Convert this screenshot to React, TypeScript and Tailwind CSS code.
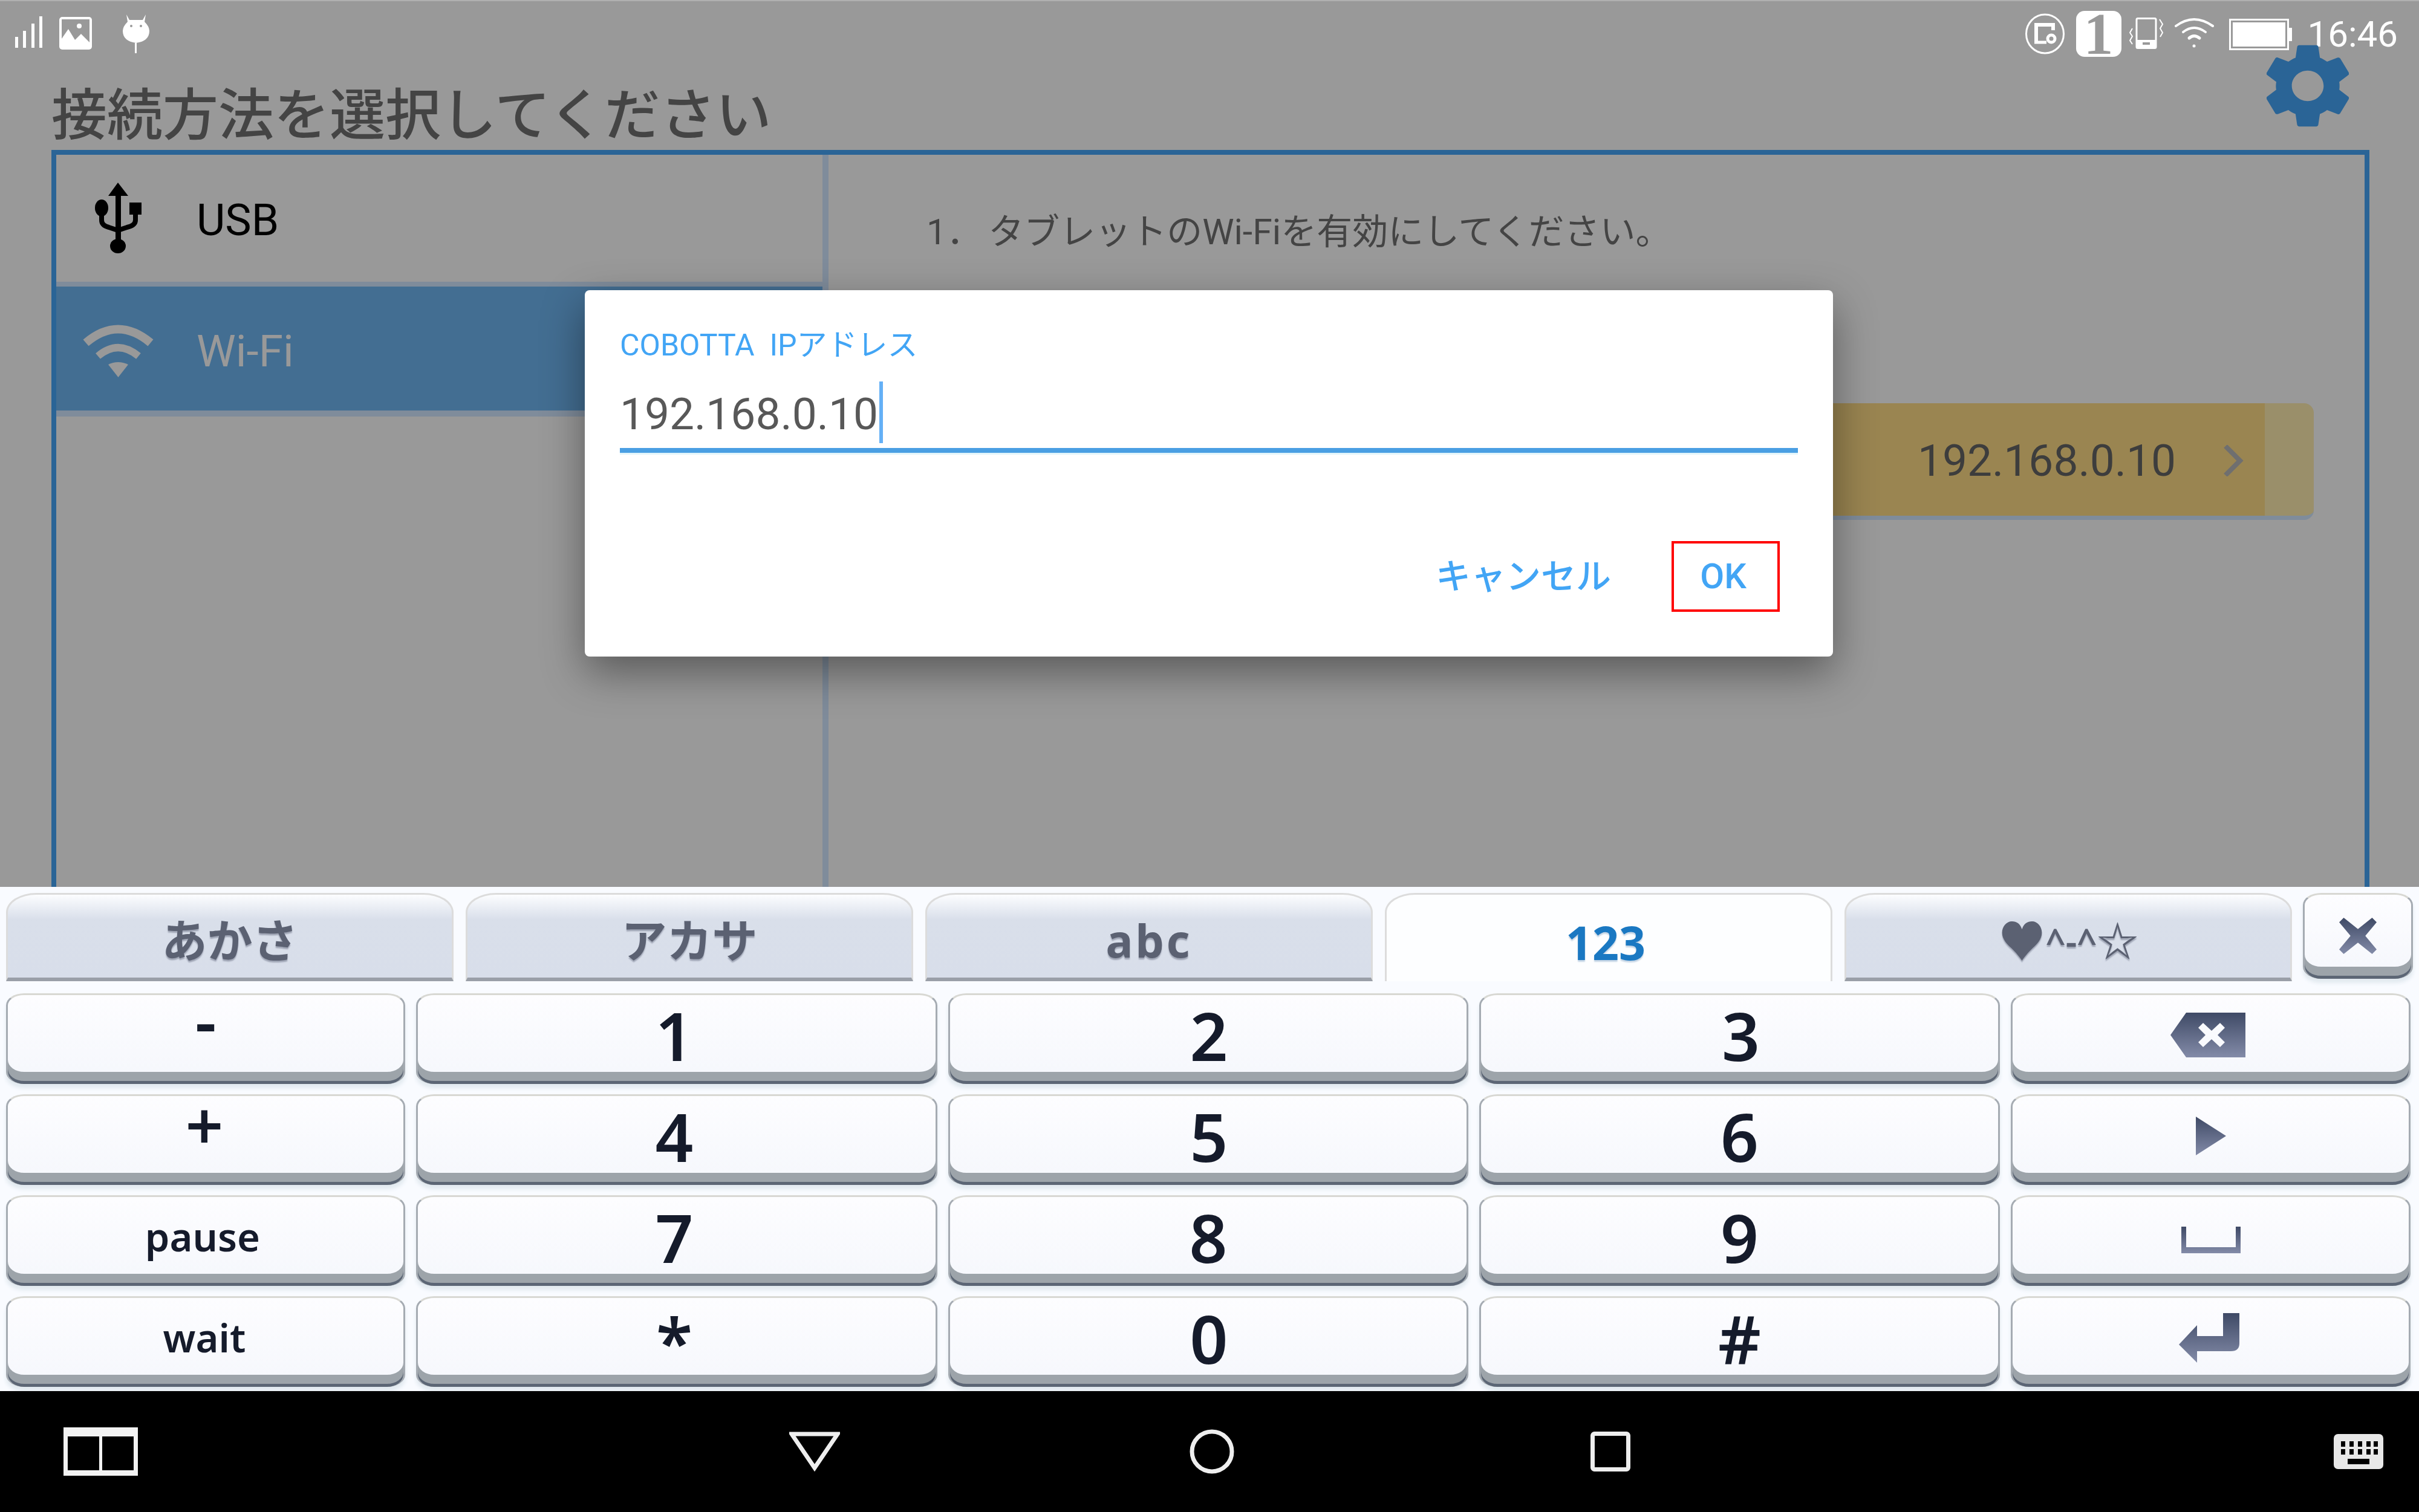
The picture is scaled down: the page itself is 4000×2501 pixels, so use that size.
import type { ReactNode } from 'react';

const SANS = "font-[Roboto,'Noto_Sans_CJK_JP',sans-serif]";

// status bar icons
function StatusLeft() {
  return (
    <div className="flex items-start pl-[25px] pt-[22px]">
      <svg width="46" height="52" viewBox="0 0 46 52" className="mt-[3px]" fill="#fff">
        <rect x="0" y="34" width="5" height="18" />
        <rect x="13" y="24" width="5" height="28" />
        <rect x="27" y="12" width="5" height="40" />
        <rect x="40" y="0" width="5" height="52" />
      </svg>
      <svg width="54" height="54" viewBox="0 0 54 54" className="ml-[27px] mt-[4px]">
        <rect x="0" y="0" width="54" height="54" rx="5" fill="#fff" />
        <rect x="4" y="4" width="46" height="46" fill="#999" />
        <circle cx="33" cy="15" r="4" fill="#fff" />
        <path d="M4 36 L15 20 L26 38 L36 28 L50 42 V50 H4 Z" fill="#fff" />
      </svg>
      <svg width="46" height="64" viewBox="0 0 46 64" className="ml-[50px]" fill="#fff">
        <path d="M7 0 L12 9 H34 L39 0 L37 12 Q45 20 45 27 Q45 44 23 47 Q1 44 1 27 Q1 20 9 12 Z" />
        <circle cx="15" cy="19" r="2" fill="#999" />
        <circle cx="31" cy="19" r="2" fill="#999" />
        <rect x="21" y="47" width="3" height="17" />
      </svg>
    </div>
  );
}

function StatusRight() {
  return (
    <div className="flex items-start pr-[35px] pt-[16px]">
      <svg width="67" height="68" viewBox="0 0 67 68" className="mt-[4px]" fill="none" stroke="#fff">
        <ellipse cx="33.5" cy="34" rx="31" ry="32" strokeWidth="3" />
        <path d="M19 48 V19 H47 V28" strokeWidth="6" />
        <path d="M16 48 H36" strokeWidth="5" />
        <circle cx="44" cy="42" r="6" strokeWidth="5" />
      </svg>
      <div className="ml-[18px] flex h-[76px] w-[75px] items-center justify-center rounded-[14px] bg-white font-['Liberation_Serif',serif] text-[98px] leading-none font-bold text-[#999]">
        1
      </div>
      <svg width="57" height="52" viewBox="0 0 57 52" className="ml-[13px] mt-[11px]" fill="none" stroke="#fff" strokeWidth="2">
        <rect x="12" y="1.5" width="32" height="49" rx="2" strokeWidth="3" />
        <rect x="12" y="38" width="32" height="12" fill="#fff" />
        <rect x="22" y="41" width="12" height="4" fill="#999" stroke="none" />
        <path d="M5 18 L1 25 L5 31 L1 38 L5 44" />
        <path d="M50 3 L55 11 L51 18 L55 25 L51 32" />
      </svg>
      <svg width="65" height="52" viewBox="0 0 65 52" className="ml-[18px] mt-[11px]" fill="none" stroke="#fff" strokeLinecap="round">
        <path d="M2 14 Q32 -8 63 14" strokeWidth="4" />
        <path d="M14 24 Q32 10 51 24" strokeWidth="4" />
        <path d="M24 34 Q32 27 41 34" strokeWidth="5" />
        <circle cx="32" cy="47" r="2.5" fill="#fff" stroke="none" />
      </svg>
      <svg width="104" height="52" viewBox="0 0 104 52" className="ml-[25px] mt-[13px]">
        <rect x="1.5" y="1.5" width="96" height="49" fill="none" stroke="#fff" strokeWidth="3" />
        <rect x="6" y="6" width="87" height="40" fill="#fff" />
        <rect x="99" y="15" width="5" height="22" fill="#fff" />
      </svg>
      <div className="ml-[26px] mt-[5px] font-[Roboto,sans-serif] text-[60px] leading-[68px] font-normal text-white">16:46</div>
    </div>
  );
}

function UsbIcon() {
  return (
    <svg width="80" height="118" viewBox="0 0 80 118" fill="#000">
      <path d="M40 0 L24 22 H57 Z" />
      <rect x="36" y="20" width="9" height="82" />
      <ellipse cx="40" cy="105" rx="13" ry="12" />
      <ellipse cx="13" cy="42" rx="11" ry="14" />
      <rect x="59" y="33" width="20" height="20" />
      <path d="M13 50 V62 Q13 71 25 74 L40 79 L55 74 Q69 71 69 62 V50" fill="none" stroke="#000" strokeWidth="8" />
    </svg>
  );
}

function WifiIcon() {
  return (
    <svg width="121" height="88" viewBox="0 0 121 88" fill="none" stroke="#999">
      <path d="M7 31 Q60 -14 114 31" strokeWidth="14" />
      <path d="M27 53 Q60 25 94 53" strokeWidth="12" />
      <path d="M44 67 Q60 59 77 67 L60.5 88 Z" fill="#999" stroke="none" />
    </svg>
  );
}

function GearIcon() {
  return (
    <svg width="136" height="140" viewBox="2.7 2 18.6 20" preserveAspectRatio="none" fill="#2a6496">
      <path d="M19.14 12.94c.04-.3.06-.61.06-.94 0-.32-.02-.64-.07-.94l2.03-1.58c.18-.14.23-.41.12-.61l-1.92-3.32c-.12-.22-.37-.29-.59-.22l-2.39.96c-.5-.38-1.03-.7-1.62-.94l-.36-2.54c-.04-.24-.24-.41-.48-.41h-3.84c-.24 0-.43.17-.47.41l-.36 2.54c-.59.24-1.13.57-1.62.94l-2.39-.96c-.22-.08-.47 0-.59.22L2.74 8.87c-.12.21-.08.47.12.61l2.03 1.58c-.05.3-.09.63-.09.94s.02.64.07.94l-2.03 1.58c-.18.14-.23.41-.12.61l1.92 3.32c.12.22.37.29.59.22l2.39-.96c.5.38 1.03.7 1.62.94l.36 2.54c.05.24.24.41.48.41h3.84c.24 0 .44-.17.47-.41l.36-2.54c.59-.24 1.13-.56 1.62-.94l2.39.96c.22.08.47 0 .59-.22l1.92-3.32c.12-.22.07-.47-.12-.61l-2.01-1.58zM12 15.6c-1.98 0-3.6-1.62-3.6-3.6s1.62-3.6 3.6-3.6 3.6 1.62 3.6 3.6-1.62 3.6-3.6 3.6z" />
    </svg>
  );
}

// IP入力ダイアログ
function IpDialog() {
  return (
    <div className={`absolute left-[967px] top-[478px] h-[606px] w-[2064px] rounded-[8px] bg-white shadow-[0_26px_70px_rgba(0,0,0,0.42)] ${SANS}`}>
      <div className="pl-[58px] pt-[56px] text-[50px] leading-[70px] whitespace-pre text-[#42a5f5]">COBOTTA  IPアドレス</div>
      <div className="mx-[58px] mt-[33px] flex h-[110px] items-start border-b-[8px] border-[#4a9fe3] shadow-[0_3px_0_#e3f5fb]">
        <span className="text-[73px] leading-[92px] text-[#585858]">192.168.0.10</span>
        <span className="ml-[2px] mt-[-8px] h-[102px] w-[6px] bg-[#64b0f6]"></span>
      </div>
      <div className="mr-[88px] mt-[146px] flex items-center justify-end">
        <span className="text-[58px] leading-none font-medium text-[#42a5f5]">キャンセル</span>
        <div className="ml-[100px] flex h-[117px] w-[179px] items-center justify-center border-[4px] border-[#f00] pr-[8px] text-[58px] font-medium text-[#42a5f5]">OK</div>
      </div>
    </div>
  );
}

function ConnectionScreen() {
  return (
    <div className={`relative h-[1467px] shrink-0 overflow-hidden border-t-[2px] border-[#b0b0b0] bg-[#999] ${SANS}`}>
      <div className="flex h-[108px] justify-between">
        <StatusLeft />
        <StatusRight />
      </div>
      <div className="absolute left-[3748px] top-[70px]">
        <GearIcon />
      </div>
      <h1 className="h-[138px] pl-[85px] pt-[34px] text-[92px] leading-[96px] font-medium text-[#444]">接続方法を選択してください</h1>
      <div className="ml-[85px] flex h-[1300px] w-[3833px] border-[8px] border-b-0 border-[#2a6496]">
        <div className="w-[1277px] shrink-0 border-r-[10px] border-[#7f8c9b]">
          <div className="flex h-[218px] items-center border-b-[8px] border-[#7f8c9b] pl-[62px]">
            <UsbIcon />
            <span className="ml-[90px] mt-[6px] text-[73px] leading-none text-black">USB</span>
          </div>
          <div className="flex h-[215px] items-center border-b-[10px] border-[#7f8c9b] bg-[#436e92] pl-[42px] pt-[6px]">
            <WifiIcon />
            <span className="ml-[69px] mt-[4px] text-[73px] leading-none text-[#999]">Wi-Fi</span>
          </div>
        </div>
        <div className="flex-1">
          <p className="pl-[162px] pt-[93px] text-[59px] leading-[70px] text-[#444]">
            <span className="mr-[10px]">1．</span>タブレットのWi-Fiを有効にしてください。
          </p>
          <div className="ml-auto mr-[84px] mt-[248px] flex h-[193px] w-[1500px] overflow-hidden rounded-r-[16px] border-b-[7px] border-[#7f8c9b] bg-[#9a8f6a]">
            <div className="flex flex-1 items-center justify-end bg-[#9a8551] pt-[4px]">
              <span className="text-[73px] leading-none text-[#3d3d3d]">192.168.0.10</span>
              <svg width="34" height="52" viewBox="0 0 34 52" className="ml-[78px] mr-[35px]" fill="none" stroke="#6f6f6f" strokeWidth="8">
                <path d="M4 2 L28 26 L4 50" />
              </svg>
            </div>
            <div className="w-[81px]"></div>
          </div>
        </div>
      </div>
      <IpDialog />
    </div>
  );
}

function Tab({ children, active = false, className = '' }: { children: ReactNode; active?: boolean; className?: string }) {
  if (active) {
    return (
      <div className={`flex h-[146px] w-[740px] shrink-0 items-center justify-center rounded-tl-[50px_32px] rounded-tr-[50px_32px] border-[3px] border-b-0 border-[#dcdcdc] bg-[#fdfeff] pt-[14px] pr-[10px] text-[77px] leading-none font-bold text-[#1a78c2] [text-shadow:0_3px_2px_#c5d5e5] ${className}`}>
        {children}
      </div>
    );
  }
  return (
    <div className={`flex h-[146px] w-[740px] shrink-0 items-center justify-center rounded-tl-[50px_32px] rounded-tr-[50px_32px] border-[3px] border-b-[6px] border-[#dcdcdc] border-b-[#9a9fa8] bg-gradient-to-b from-[#fcfdff] via-[#d9dfea] via-30% to-[#d8deea] pt-[14px] text-[75px] leading-none font-bold text-[#5b6172] [text-shadow:0_3px_2px_#9ea4b4] ${className}`}>
      {children}
    </div>
  );
}

function Key({ children, className = '' }: { children: ReactNode; className?: string }) {
  return (
    <div className={`flex items-center justify-center rounded-[30px_/_20px] border-x-[3px] border-t-[3px] border-x-[#a5abb2] border-t-[#d8d8d3] bg-gradient-to-b from-[#fdfdff] to-[#f5f7fc] pb-[16px] leading-none font-semibold text-[#151b2b] shadow-[inset_0_-5px_0_#5c6675,inset_0_-20px_0_#9da4aa,0_7px_6px_#e2eaf0] ${className}`}>
      {children}
    </div>
  );
}

const DIGIT = 'text-[110px]';
const SMALL = 'text-[65px]';

function KeyIcon({ width, height, children, view, className }: { width: number; height: number; children: ReactNode; view: string; className?: string }) {
  return (
    <svg width={width} height={height} viewBox={view} className={className}>
      {children}
    </svg>
  );
}

function Keyboard() {
  return (
    <div className="h-[834px] shrink-0 bg-[#f9fbff] font-['Noto_Sans','Noto_Sans_CJK_JP',sans-serif]">
      <svg width="0" height="0" className="absolute">
        <defs>
          <linearGradient id="slate" x1="0" y1="0" x2="0" y2="1">
            <stop offset="0" stopColor="#3f4a66" />
            <stop offset="1" stopColor="#838ba8" />
          </linearGradient>
        </defs>
      </svg>
      <div className="flex gap-[20px] pl-[10px] pt-[10px]">
        <Tab>あかさ</Tab>
        <Tab>アカサ</Tab>
        <Tab className="tracking-[4px]">abc</Tab>
        <Tab active>123</Tab>
        <Tab>
          <span className="text-[78px]">♥</span>
          <span className="text-[58px] font-semibold">^-^</span>
          <span className="text-[68px]">☆</span>
        </Tab>
        <Key className="ml-[-2px] h-[142px] w-[182px] shrink-0 pt-[12px]">
          <KeyIcon width={62} height={66} view="0 0 66 64">
            <path d="M8 0 L33 20 L58 0 L66 8 L46 32 L66 56 L58 64 L33 44 L8 64 L0 56 L20 32 L0 8 Z" fill="url(#slate)" />
          </KeyIcon>
        </Key>
      </div>
      <div className="mt-[20px] grid grid-cols-[660px_862px_860px_861px_661px] grid-rows-[150px_150px_150px_150px] gap-x-[18px] gap-y-[17px] pl-[10px]">
        <Key className={`${DIGIT} pb-[66px]`}>-</Key>
        <Key className={`${DIGIT} pr-[8px]`}>1</Key>
        <Key className={`${DIGIT} pl-[2px]`}>2</Key>
        <Key className={`${DIGIT} pl-[4px]`}>3</Key>
        <Key className="pr-[10px]">
          <KeyIcon width={124} height={74} view="0 0 124 74">
            <path d="M26 0 H124 V74 H26 L0 37 Z M54 17 L68 30 L82 17 L90 25 L78 37 L90 49 L82 57 L68 44 L54 57 L46 49 L58 37 L46 25 Z" fill="url(#slate)" fillRule="evenodd" />
          </KeyIcon>
        </Key>
        <Key className={`${DIGIT} pb-[56px] pr-[4px]`}>+</Key>
        <Key className={`${DIGIT} pr-[8px]`}>4</Key>
        <Key className={`${DIGIT} pl-[2px]`}>5</Key>
        <Key className={DIGIT}>6</Key>
        <Key>
          <KeyIcon width={50} height={64} view="0 0 50 64">
            <path d="M0 0 L50 32 L0 64 Z" fill="url(#slate)" />
          </KeyIcon>
        </Key>
        <Key className={`${SMALL} pr-[10px]`}>pause</Key>
        <Key className={`${DIGIT} pr-[8px]`}>7</Key>
        <Key className={DIGIT}>8</Key>
        <Key className={DIGIT}>9</Key>
        <Key className="pt-[10px]">
          <KeyIcon width={98} height={44} view="0 0 98 44">
            <path d="M0 0 H8 V34 H90 V0 H98 V44 H0 Z" fill="url(#slate)" />
          </KeyIcon>
        </Key>
        <Key className={`${SMALL} pr-[4px]`}>wait</Key>
        <Key className={`${DIGIT} pr-[8px] pt-[10px]`}>*</Key>
        <Key className={`${DIGIT} pl-[2px]`}>0</Key>
        <Key className={DIGIT}>#</Key>
        <Key className="pr-[4px]">
          <KeyIcon width={102} height={82} view="0 0 102 82">
            <path d="M73 0 H100 V50 Q100 63 86 63 H30 V82 L0 52 L30 20 V38 H73 Z" fill="url(#slate)" />
          </KeyIcon>
        </Key>
      </div>
    </div>
  );
}

function NavBar() {
  return (
    <div className="flex h-[200px] items-center bg-black">
      <svg width="123" height="80" viewBox="0 0 123 80" className="ml-[105px]">
        <path d="M0 0 H123 V80 H0 Z M7 15 V71 H59 V15 Z M64 15 V71 H116 V15 Z" fill="#f2f2f2" fillRule="evenodd" />
      </svg>
      <svg width="84" height="66" viewBox="0 0 84 66" className="ml-[1077px]" fill="none" stroke="#eee" strokeWidth="7">
        <path d="M4 4 H80 L42 60 Z" />
      </svg>
      <svg width="74" height="74" viewBox="0 0 74 74" className="ml-[578px]" fill="none" stroke="#eee" strokeWidth="7">
        <circle cx="37" cy="37" r="33" />
      </svg>
      <svg width="66" height="66" viewBox="0 0 66 66" className="ml-[589px]" fill="none" stroke="#eee" strokeWidth="7">
        <rect x="3.5" y="3.5" width="59" height="59" rx="3" />
      </svg>
      <svg width="82" height="58" viewBox="0 0 82 58" className="ml-[1163px]">
        <rect width="82" height="58" rx="7" fill="#e8e8e8" />
        {[12, 26, 40, 54, 66].map((x) => (
          <g key={x} fill="#000">
            <rect x={x} y="12" width="7" height="9" />
            <rect x={x} y="25" width="7" height="9" />
          </g>
        ))}
        <rect x="23" y="41" width="36" height="9" fill="#000" />
      </svg>
    </div>
  );
}

export default function App() {
  return (
    <div className="flex h-[2501px] w-[4000px] flex-col overflow-hidden">
      <ConnectionScreen />
      <Keyboard />
      <NavBar />
    </div>
  );
}
